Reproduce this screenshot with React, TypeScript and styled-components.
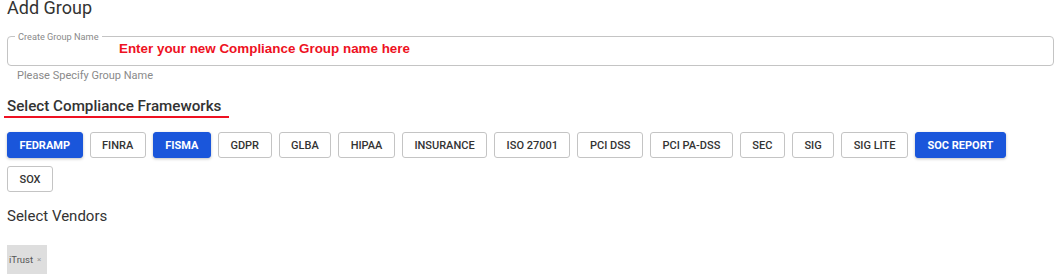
import React from "react";
import styled, { createGlobalStyle } from "styled-components";

const GlobalStyle = createGlobalStyle`
  body {
    margin: 0;
    background: #fff;
    font-family: Roboto, "Liberation Sans", Arial, sans-serif;
    color: #333;
  }
`;

const Page = styled.div`
  display: flex;
  flex-direction: column;
  padding: 0 7px;
  width: 1047px;
`;

const Title = styled.h1`
  margin: -1px 0 0;
  font-size: 18px;
  line-height: 18px;
  font-weight: 400;
  color: #333;
`;

const Field = styled.div`
  position: relative;
  margin-top: 19px;
  height: 28px;
  border: 1px solid #c4c4c4;
  border-radius: 4px;
  display: flex;
  align-items: center;
`;

const FieldLabel = styled.span`
  position: absolute;
  left: 7px;
  top: -6px;
  padding: 0 3px;
  background: #fff;
  font-size: 9.2px;
  line-height: 11px;
  color: #8a8a8a;
`;

const Hint = styled.span`
  margin-left: 111px;
  margin-top: -5px;
  font-family: "Liberation Sans", Arial, sans-serif;
  font-weight: 700;
  font-size: 13.4px;
  color: #ee1122;
`;

const Helper = styled.div`
  margin: 4px 0 0 10px;
  font-size: 11px;
  line-height: 12px;
  color: #8a8a8a;
`;

const SectionTitle = styled.h2`
  align-self: flex-start;
  margin: 16px 0 0 -3px;
  padding: 0 8px 1px 3px;
  border-bottom: 2px solid #ee1122;
  font-size: 15.2px;
  line-height: 17px;
  font-weight: 500;
  color: #333;
`;

const Chips = styled.div`
  display: flex;
  flex-wrap: wrap;
  gap: 8px 7px;
  margin-top: 14px;
`;

const Toggle = styled.button<{ $active?: boolean }>`
  height: 26px;
  padding: 0 11.5px;
  border-radius: 3px;
  border: 1px solid ${({ $active }) => ($active ? "#1a56db" : "#c4c4c4")};
  background: ${({ $active }) => ($active ? "#1a56db" : "#fff")};
  color: ${({ $active }) => ($active ? "#fff" : "#333")};
  box-shadow: ${({ $active }) =>
    $active ? "0 1px 3px rgba(0,0,0,0.25)" : "none"};
  font-family: Roboto, "Liberation Sans", Arial, sans-serif;
  font-size: 11px;
  font-weight: ${({ $active }) => ($active ? 700 : 500)};
  text-transform: uppercase;
  cursor: pointer;
`;

const SubTitle = styled.h3`
  margin: 16px 0 0;
  font-size: 15px;
  line-height: 17px;
  font-weight: 400;
  color: #333;
`;

const VendorRow = styled.div`
  display: flex;
  margin-top: 20px;
`;

const Vendor = styled.span`
  display: inline-flex;
  align-items: center;
  gap: 4px;
  height: 29px;
  padding: 0 6px 0 2px;
  background: #dedede;
  font-size: 9.5px;
  color: #555;

  span {
    color: #999;
    font-size: 8px;
  }
`;

const frameworks = [
  "FEDRAMP",
  "FINRA",
  "FISMA",
  "GDPR",
  "GLBA",
  "HIPAA",
  "INSURANCE",
  "ISO 27001",
  "PCI DSS",
  "PCI PA-DSS",
  "SEC",
  "SIG",
  "SIG LITE",
  "SOC REPORT",
  "SOX",
];

const selected = ["FEDRAMP", "FISMA", "SOC REPORT"];

export default function App() {
  return (
    <>
      <GlobalStyle />
      <Page>
        <Title>Add Group</Title>
        <Field>
          <FieldLabel>Create Group Name</FieldLabel>
          <Hint>Enter your new Compliance Group name here</Hint>
        </Field>
        <Helper>Please Specify Group Name</Helper>
        <SectionTitle>Select Compliance Frameworks</SectionTitle>
        <Chips>
          {frameworks.map((f) => (
            <Toggle key={f} $active={selected.includes(f)}>
              {f}
            </Toggle>
          ))}
        </Chips>
        <SubTitle>Select Vendors</SubTitle>
        <VendorRow>
          <Vendor>
            iTrust <span>×</span>
          </Vendor>
        </VendorRow>
      </Page>
    </>
  );
}
